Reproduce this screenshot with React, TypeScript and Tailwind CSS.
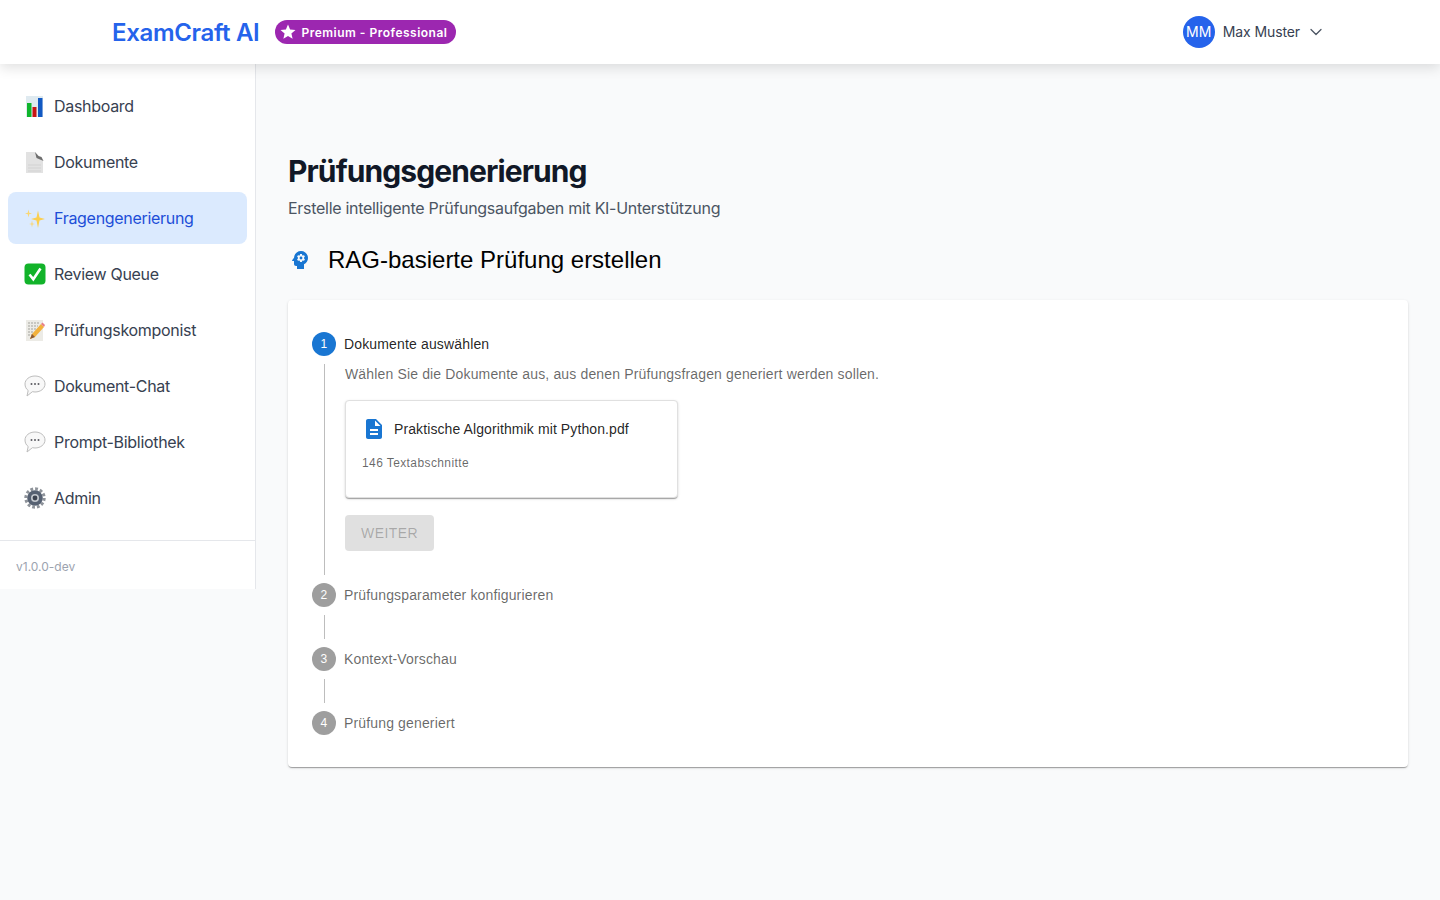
import { ChevronDown } from "lucide-react";

const navItems = [
  { label: "Dashboard", icon: <BarsIcon /> },
  { label: "Dokumente", icon: <PageIcon /> },
  { label: "Fragengenerierung", icon: <SparkleIcon />, active: true },
  { label: "Review Queue", icon: <CheckIcon /> },
  { label: "Prüfungskomponist", icon: <MemoIcon /> },
  { label: "Dokument-Chat", icon: <BubbleIcon /> },
  { label: "Prompt-Bibliothek", icon: <BubbleIcon /> },
  { label: "Admin", icon: <GearIcon /> },
];

const pendingSteps = [
  { num: 2, label: "Prüfungsparameter konfigurieren" },
  { num: 3, label: "Kontext-Vorschau" },
  { num: 4, label: "Prüfung generiert" },
];

function BarsIcon() {
  return (
    <svg width="20" height="21" viewBox="0 0 20 21">
      <rect x="1" y="0" width="17" height="21" fill="#dfeaf0" />
      <rect x="2" y="7" width="4.500" height="14" fill="#0fb52c" />
      <rect x="7.500" y="11" width="4" height="10" fill="#c81414" />
      <rect x="13" y="2" width="4.500" height="19" fill="#1259c3" />
    </svg>
  );
}

function PageIcon() {
  return (
    <svg width="20" height="21" viewBox="0 0 20 21">
      <path d="M1 0h9l8 9v12H1z" fill="#e2e2e2" />
      <path d="M10 0l1.500 6 7 3-2-4-3-1z" fill="#6e6e6e" />
      <path d="M3 13h13M3 16h13M3 19h13" stroke="#d2d2d2" strokeWidth="1" />
    </svg>
  );
}

function SparkleIcon() {
  return (
    <svg width="22" height="22" viewBox="0 0 22 22">
      <path d="M14 3.500l1.500 7 5.500 1.500-5.500 1.500L14 21l-1.500-7.500L7 12l5.500-1.500z" fill="#fbcf50" />
      <path d="M4.500 2.500l.7 3.300 2.800.7-2.800.7-.7 3.300-.7-3.300L1 6.500l2.800-.7z" fill="#fad672" />
      <path d="M8 13.500l.6 2.900 2.400.6-2.400.6L8 20.500l-.6-2.900L5 17l2.400-.6z" fill="#fad672" />
    </svg>
  );
}

function CheckIcon() {
  return (
    <svg width="22" height="22" viewBox="0 0 22 22">
      <rect x="0.500" y="0.500" width="21" height="21" rx="4" fill="#12b32a" />
      <path d="M5.500 11.500l3.800 4.800L16.500 5.500" fill="none" stroke="#fff" strokeWidth="2.600" />
    </svg>
  );
}

function MemoIcon() {
  return (
    <svg width="20" height="21" viewBox="0 0 20 21">
      <rect x="1" y="0" width="17" height="21" fill="#ecebe6" />
      <path d="M3 3h12M3 6h10M3 9h8M3 12h5M3 15h4" stroke="#a3a39d" strokeWidth="1" strokeDasharray="2 1" />
      <path d="M5 19l2-5 9-10 3 3-9 10z" fill="#f2b13c" />
      <path d="M16 4l1.500-1.500 2.500 2.500L19 7z" fill="#e8808a" />
      <path d="M5 19l2-5 3 3z" fill="#8b5a36" />
    </svg>
  );
}

function BubbleIcon() {
  return (
    <svg width="22" height="22" viewBox="0 0 22 22">
      <path d="M11 1c5.600 0 10 3.500 10 8S16.600 17 11 17c-.9 0-1.800-.1-2.600-.3L3 21l1.200-5.500C2.200 14 1 11.900 1 9c0-4.500 4.400-8 10-8z" fill="#f8f8f8" stroke="#bdbdbd" strokeWidth="1" />
      <circle cx="7.500" cy="9" r="1" fill="#5c5c62" />
      <circle cx="11" cy="9" r="1" fill="#5c5c62" />
      <circle cx="14.500" cy="9" r="1" fill="#5c5c62" />
    </svg>
  );
}

function GearIcon() {
  return (
    <svg width="22" height="22" viewBox="0 0 22 22">
      <circle cx="11" cy="11" r="9.200" fill="none" stroke="#8e939a" strokeWidth="3" strokeDasharray="2.800 2" />
      <circle cx="11" cy="11" r="7.800" fill="#566172" />
      <circle cx="11" cy="11" r="4" fill="#c3c8ce" />
      <circle cx="11" cy="11" r="2.400" fill="#3c4350" />
    </svg>
  );
}

// MUI Psychology icon
function PsychologyIcon() {
  return (
    <svg width="24" height="24" viewBox="0 0 24 24" fill="#1976d2">
      <path d="M13 8.570c-.79 0-1.430.64-1.430 1.430s.64 1.430 1.430 1.430 1.430-.64 1.430-1.430-.64-1.430-1.430-1.430z" />
      <path d="M13 3C9.250 3 6.200 5.940 6.020 9.640L4.100 12.200c-.25.33-.01.8.4.8H6v3c0 1.100.9 2 2 2h1v3h7v-4.680c2.360-1.120 4-3.530 4-6.320 0-3.870-3.130-7-7-7zm3 7c0 .13-.01.26-.02.39l.83.66c.08.06.1.16.05.25l-.8 1.390c-.05.09-.16.12-.24.09l-.99-.4c-.21.16-.43.29-.67.39L14 13.830c-.01.1-.1.170-.2.170h-1.600c-.1 0-.18-.07-.2-.17l-.15-1.060c-.25-.1-.47-.23-.68-.39l-.99.4c-.09.03-.2 0-.25-.09l-.8-1.390c-.05-.08-.03-.19.05-.25l.84-.66c-.01-.13-.02-.26-.02-.39s.02-.27.04-.39l-.85-.66c-.08-.06-.1-.16-.05-.26l.8-1.380c.05-.09.15-.12.24-.09l1 .4c.2-.15.43-.29.67-.39L12 6.170c.02-.1.1-.170.2-.170h1.600c.1 0 .18.070.2.170l.15 1.060c.24.1.46.230.67.390l1-.4c.09-.03.2 0 .24.090l.8 1.380c.05.09.03.2-.05.26l-.85.66c.03.12.04.250.04.390z" />
    </svg>
  );
}

// MUI Description icon
function DescriptionIcon() {
  return (
    <svg width="24" height="24" viewBox="0 0 24 24" fill="#1976d2">
      <path d="M14 2H6c-1.100 0-1.990.9-1.990 2L4 20c0 1.100.89 2 1.990 2H18c1.100 0 2-.9 2-2V8l-6-6zm2 16H8v-2h8v2zm0-4H8v-2h8v2zm-3-5V3.500L18.500 9H13z" />
    </svg>
  );
}

// MUI Star icon
function StarIcon() {
  return (
    <svg width="18" height="18" viewBox="0 0 24 24" fill="#fff">
      <path d="M12 17.270L18.180 21l-1.640-7.030L22 9.240l-7.190-.61L12 2 9.190 8.630 2 9.240l5.460 4.730L5.820 21z" />
    </svg>
  );
}

function StepBadge({ num, active }: { num: number; active?: boolean }) {
  return (
    <div
      className={
        active
          ? "w-6 h-6 rounded-full bg-[#1976d2] text-white text-xs flex items-center justify-center shrink-0"
          : "w-6 h-6 rounded-full bg-[#9e9e9e] text-white text-xs flex items-center justify-center shrink-0"
      }
    >
      {num}
    </div>
  );
}

export default function App() {
  return (
    <div className="min-h-screen bg-[#f9fafb] font-['Inter',sans-serif]">
      <header className="relative z-10 h-16 bg-white shadow-[0_4px_12px_rgba(0,0,0,0.12)] flex items-center justify-between pl-28 pr-[114px]">
        <div className="flex items-center gap-4">
          <span className="text-[24px] leading-8 font-semibold tracking-[-0.33px] text-[#2563eb] translate-y-px">ExamCraft AI</span>
          <span className="h-6 pl-1 pr-2 rounded-full bg-[#9c27b0] text-white flex items-center gap-1 text-xs font-semibold tracking-[0.5px]">
            <StarIcon />
            <span className="pt-0.5">Premium - Professional</span>
          </span>
        </div>
        <div className="flex items-center">
          <div className="w-8 h-8 rounded-full bg-[#2563eb] text-white text-sm flex items-center justify-center">MM</div>
          <span className="ml-2 text-sm font-normal tracking-[-0.1px] text-[#374151]">Max Muster</span>
          <ChevronDown size={20} strokeWidth={1.500} className="ml-1.5 text-[#4b5563]" />
        </div>
      </header>

      <div className="flex items-start">
        <aside className="w-64 shrink-0 bg-white border-r border-[#e5e7eb]">
          <nav className="p-2 pt-4 pb-4 flex flex-col gap-1">
            {navItems.map((item) => (
              <div
                key={item.label}
                className={
                  item.active
                    ? "h-[52px] rounded-lg bg-[#dbeafe] text-[#1d4ed8] flex items-center px-4"
                    : "h-[52px] rounded-lg text-[#374151] flex items-center px-4"
                }
              >
                <span className="w-[22px] h-[22px] mr-2 flex items-center justify-center shrink-0">{item.icon}</span>
                <span className="text-base font-normal tracking-[-0.3px]">{item.label}</span>
              </div>
            ))}
          </nav>
          <div className="border-t border-[#e5e7eb] px-4 pt-[18px] pb-4 text-xs leading-4 text-[#9ca3af] h-[49px]">v1.0.0-dev</div>
        </aside>

        <main className="flex-1 min-w-0 px-8 pt-[89px] pb-8">
          <h1 className="text-[30px] leading-9 font-bold tracking-[-0.9px] text-[#111827]">Prüfungsgenerierung</h1>
          <p className="mt-[7px] text-base leading-6 tracking-[-0.29px] text-[#4b5563]">Erstelle intelligente Prüfungsaufgaben mit KI-Unterstützung</p>

          <div className="mt-[23px] flex items-center font-['Liberation_Sans',sans-serif]">
            <PsychologyIcon />
            <h2 className="ml-4 text-2xl leading-[34px] text-black">RAG-basierte Prüfung erstellen</h2>
          </div>

          <div className="mt-[23px] h-[467px] bg-white rounded shadow-[0_2px_1px_-1px_rgba(0,0,0,0.2),0_1px_1px_0_rgba(0,0,0,0.14),0_1px_3px_0_rgba(0,0,0,0.12)] p-6 pt-8 font-['Liberation_Sans',sans-serif] tracking-[0.15px]">
            <div className="flex items-center gap-2 h-6">
              <StepBadge num={1} active />
              <span className="text-sm text-[#000000de]">Dokumente auswählen</span>
            </div>
            <div className="ml-3 mt-2 pl-5 border-l border-[#bdbdbd] h-[211px]">
              <p className="text-sm leading-5 text-[#00000099]">Wählen Sie die Dokumente aus, aus denen Prüfungsfragen generiert werden sollen.</p>
              <div className="mt-4 w-[333px] h-[98px] rounded bg-white border border-[#e0e0e0] shadow-[0_2px_1px_-1px_rgba(0,0,0,0.2),0_1px_1px_0_rgba(0,0,0,0.14),0_1px_3px_0_rgba(0,0,0,0.12)] p-4">
                <div className="flex items-center gap-2">
                  <DescriptionIcon />
                  <span className="text-sm tracking-[0.1px] text-[#000000de]">Praktische Algorithmik mit Python.pdf</span>
                </div>
                <p className="mt-3 text-xs leading-5 tracking-[0.4px] text-[#00000099]">146 Textabschnitte</p>
              </div>
              <button className="mt-[17px] h-9 w-[89px] rounded bg-[#e0e0e0] text-sm font-medium text-[#00000042] tracking-[0.4px]">WEITER</button>
            </div>
            {pendingSteps.map((step, index) => (
              <div key={step.num}>
                <div className="mt-2 flex items-center gap-2 h-6">
                  <StepBadge num={step.num} />
                  <span className="text-sm text-[#00000099]">{step.label}</span>
                </div>
                {index < pendingSteps.length - 1 && <div className="ml-3 mt-2 h-6 border-l border-[#bdbdbd]" />}
              </div>
            ))}
          </div>
        </main>
      </div>
    </div>
  );
}
